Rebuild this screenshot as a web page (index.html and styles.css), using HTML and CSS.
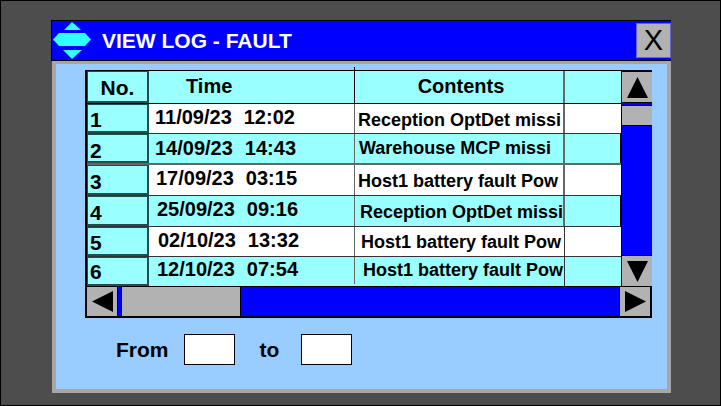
FILE: index.html
```html
<!DOCTYPE html>
<html lang="en">
<head>
    <meta charset="UTF-8">
    <meta name="viewport" content="width=device-width, initial-scale=1.0">
    <title>View Log - Fault</title>
    <link rel="stylesheet" href="styles.css">
</head>
<body>

    <div class="screen">
        <div class="window">
            <div class="title-bar">
                <svg class="title-icon" width="39" height="39" viewBox="0 0 39 39">
                    <polygon points="19,1 28,9 11,9" fill="#33ffff"/>
                    <polygon points="6,12 32,12 38,18.5 32,25 6,25 0,18.5" fill="#33ffff"/>
                    <polygon points="10,29 29,29 19,38" fill="#33ffff"/>
                </svg>
                <span class="title-text">VIEW LOG - FAULT</span>
                <button class="close-btn">X</button>
            </div>

            <div class="panel">
                <div class="log-table">
                    <div class="log-top">
                        <div class="log-rows">
                            <div class="log-row head">
                                <div class="cell no">No.</div>
                                <div class="cell time">Time</div>
                                <div class="cell contents">Contents</div>
                                <div class="cell extra"></div>
                            </div>
                            <div class="log-row">
                                <div class="cell no">1</div>
                                <div class="cell time"><span>11/09/23</span><span>12:02</span></div>
                                <div class="cell contents">Reception OptDet missi</div>
                                <div class="cell extra"></div>
                            </div>
                            <div class="log-row alt">
                                <div class="cell no">2</div>
                                <div class="cell time"><span>14/09/23</span><span>14:43</span></div>
                                <div class="cell contents">Warehouse MCP missi</div>
                                <div class="cell extra"></div>
                            </div>
                            <div class="log-row">
                                <div class="cell no">3</div>
                                <div class="cell time"><span>17/09/23</span><span>03:15</span></div>
                                <div class="cell contents">Host1 battery fault Pow</div>
                                <div class="cell extra"></div>
                            </div>
                            <div class="log-row alt">
                                <div class="cell no">4</div>
                                <div class="cell time"><span>25/09/23</span><span>09:16</span></div>
                                <div class="cell contents">Reception OptDet missi</div>
                                <div class="cell extra"></div>
                            </div>
                            <div class="log-row">
                                <div class="cell no">5</div>
                                <div class="cell time"><span>02/10/23</span><span>13:32</span></div>
                                <div class="cell contents">Host1 battery fault Pow</div>
                                <div class="cell extra"></div>
                            </div>
                            <div class="log-row alt">
                                <div class="cell no">6</div>
                                <div class="cell time"><span>12/10/23</span><span>07:54</span></div>
                                <div class="cell contents">Host1 battery fault Pow</div>
                                <div class="cell extra"></div>
                            </div>
                            <div class="col-tick"></div>
                        </div>

                        <div class="v-scroll">
                            <div class="arrow-btn up">
                                <svg width="21" height="21" viewBox="0 0 21 21"><polygon points="10.5,0 21,21 0,21"/></svg>
                            </div>
                            <div class="v-thumb"></div>
                            <div class="v-track"></div>
                            <div class="arrow-btn down">
                                <svg width="21" height="21" viewBox="0 0 21 21"><polygon points="0,0 21,0 10.5,21"/></svg>
                            </div>
                        </div>
                    </div>

                    <div class="h-scroll">
                        <div class="arrow-btn left">
                            <svg width="21" height="21" viewBox="0 0 21 21"><polygon points="0,10.5 21,0 21,21"/></svg>
                        </div>
                        <div class="h-gap"></div>
                        <div class="h-thumb"></div>
                        <div class="h-track"></div>
                        <div class="arrow-btn right">
                            <svg width="21" height="21" viewBox="0 0 21 21"><polygon points="0,0 21,10.5 0,21"/></svg>
                        </div>
                    </div>
                </div>

                <div class="date-range">
                    <span class="from-label">From</span>
                    <div class="date-box"></div>
                    <span class="to-label">to</span>
                    <div class="date-box"></div>
                </div>
            </div>
        </div>
    </div>

</body>
</html>
```

FILE: styles.css
```css
* {
    box-sizing: border-box;
}

body {
    margin: 0;
    font-family: "Liberation Sans", Arial, sans-serif;
    color: #000;
}

.screen {
    width: 721px;
    height: 406px;
    padding: 19px 49px 12px 50px;
    background-color: #4d4d4d;
    border: 1px solid #000;
    overflow: hidden;
}

.window {
    width: 620px;
}

.title-bar {
    display: flex;
    align-items: center;
    height: 41px;
    background-color: #0000ff;
    border: 1px solid #000;
    border-width: 1px 0 1px 1px;
    color: #fff;
}

.title-icon {
    margin-left: 1px;
    flex-shrink: 0;
}

.title-text {
    margin-left: 10px;
    font-size: 21px;
    font-weight: bold;
}

.close-btn {
    margin-left: auto;
    width: 35px;
    height: 35px;
    padding: 0;
    background-color: #b2b2b2;
    border: 1px solid #6666cc;
    font-family: "Liberation Sans", Arial, sans-serif;
    font-size: 29px;
    color: #000;
}

.panel {
    height: 332px;
    margin-left: 1px;
    padding: 6px 0 0 29px;
    background-color: #99ccff;
    border: 4px solid #a6a6a6;
    border-top-width: 3px;
}

.log-table {
    width: 567px;
    height: 248px;
    border: 2px solid #000;
    border-top-width: 1px;
}

.log-top {
    display: flex;
    height: 215px;
}

.log-rows {
    position: relative;
    width: 534px;
}

/* short stroke of the column line that pokes out above the table */
.col-tick {
    position: absolute;
    left: 267px;
    top: -4px;
    width: 1px;
    height: 4px;
    background-color: #000;
}

.log-row {
    display: flex;
    height: 31px;
    background-color: #fff;
    border-bottom: 1px solid #333;
    font-weight: bold;
}

.log-row.alt {
    background-color: #99ffff;
}

.log-row.head {
    height: 33px;
    background-color: #99ffff;
    border-bottom-color: #000;
}

.log-row:nth-child(2),
.log-row:nth-child(6) {
    height: 30px;
}

.log-row:nth-child(3) {
    border-bottom: 2px solid #666;
}

.log-row:nth-child(7) {
    height: 29px;
    border-bottom: none;
}

.cell {
    display: flex;
    align-items: center;
    white-space: nowrap;
    overflow: hidden;
}

.no {
    width: 62px;
    padding: 4px 0 0 2px;
    background-color: #99ffff;
    border: 2px solid #1f4f4f;
    border-top-width: 1px;
    border-left-width: 1px;
    font-size: 21px;
}

.head .no {
    justify-content: center;
    padding: 2px 0 0;
}

.time {
    width: 206px;
    gap: 12px;
    padding-bottom: 3px;
    border-right: 1px solid #666;
    font-size: 20px;
}

.contents {
    width: 210px;
    font-size: 18px;
    border-right: 2px solid #666;
}

.extra {
    width: 56px;
}

.log-row:nth-child(3) .extra,
.log-row:nth-child(5) .extra {
    border-right: 1px solid #000;
}

.head .time {
    padding: 0 0 2px 37px;
    border-right-color: #000;
}

.head .contents {
    justify-content: center;
    padding: 0 0 2px 4px;
    font-size: 20px;
}

/* text in the log wanders a little from row to row */
.log-row:nth-child(2) .time { padding-left: 6px; }
.log-row:nth-child(3) .time { padding-left: 6px; padding-bottom: 0; }
.log-row:nth-child(4) .time { padding-left: 7px; }
.log-row:nth-child(5) .time { padding-left: 8px; }
.log-row:nth-child(6) .time { padding-left: 9px; }
.log-row:nth-child(7) .time {
    padding-left: 8px;
    padding-bottom: 4px;
    border-image: linear-gradient(#666 90%, transparent 90%) 1;
}
.log-row:nth-child(2) .contents { padding: 4px 0 0 3px; }
.log-row:nth-child(3) .contents { padding: 0 0 0 4px; }
.log-row:nth-child(4) .contents { padding: 2px 0 0 3px; }
.log-row:nth-child(5) .contents { padding: 2px 0 0 5px; }
.log-row:nth-child(6) .contents { padding: 2px 0 0 6px; border-right: 1px solid #333; }
.log-row:nth-child(7) .contents { padding: 0 0 2px 8px; border-right: 1px solid #333; }
.log-row:nth-child(3) .no { padding-top: 6px; }
.log-row:nth-child(7) .no { padding-top: 2px; }

.v-scroll {
    display: flex;
    flex-direction: column;
    width: 31px;
    background-color: #0000ff;
    border-left: 1px solid #000;
}

.arrow-btn {
    display: flex;
    align-items: center;
    justify-content: center;
    width: 30px;
    height: 31px;
    background-color: #b2b2b2;
    flex-shrink: 0;
}

.arrow-btn svg {
    display: block;
}

.up {
    height: 32px;
    border-top: 1px solid #000;
    border-bottom: 1px solid #000;
}

.v-thumb {
    height: 21px;
    margin-top: 2px;
    background-color: #b2b2b2;
    border-top: 1px solid #000;
    border-bottom: 1px solid #000;
}

.v-track {
    flex: 1;
}

.down {
    border-top: 1px solid #000;
}

.h-scroll {
    display: flex;
    height: 30px;
    background-color: #0000ff;
    border-top: 1px solid #000;
}

.left {
    width: 31px;
    height: 29px;
    border-right: 1px solid #000;
}

.h-gap {
    width: 3px;
}

.h-thumb {
    width: 120px;
    background-color: #b2b2b2;
    border-left: 1px solid #000;
    border-right: 1px solid #000;
}

.h-track {
    flex: 1;
}

.right {
    width: 31px;
    height: 29px;
    border-left: 1px solid #000;
}

.date-range {
    display: flex;
    align-items: center;
    margin-top: 16px;
    padding-left: 31px;
    font-size: 21px;
    font-weight: bold;
}

.date-box {
    width: 51px;
    height: 31px;
    background-color: #fff;
    border: 1px solid #000;
}

.from-label {
    margin-right: 15px;
}

.to-label {
    margin: 0 22px 0 25px;
}
```
